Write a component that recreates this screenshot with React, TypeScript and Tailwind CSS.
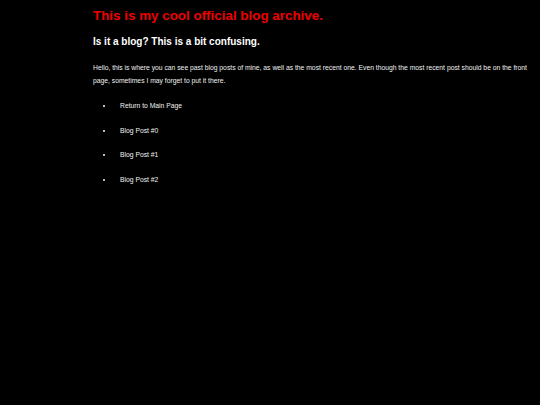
export default function App() {
  const links = ["Return to Main Page", "Blog Post #0", "Blog Post #1", "Blog Post #2"];
  return (
    <div
      className="min-h-[405px] w-full bg-black pl-[93px] pt-[8px] text-white antialiased"
      style={{ fontFamily: '"Liberation Sans", Arial, sans-serif' }}
    >
      <h1 className="text-[13.4px] font-bold leading-[16px] text-[#ee0000]">
        This is my cool official blog archive.
      </h1>
      <h2 className="mt-[12px] text-[10px] font-bold leading-[12px]">
        Is it a blog? This is a bit confusing.
      </h2>
      <p className="mt-[13px] w-[438px] text-[6.77px] leading-[13px] text-[#f0f0f0]">
        Hello, this is where you can see past blog posts of mine, as well as the most recent one. Even though the
        most recent post should be on the front page, sometimes I may forget to put it there.
      </p>
      <ul className="mt-[7px]">
        {links.map((t) => (
          <li key={t} className="flex items-center text-[6.77px] leading-[24.5px] text-[#f0f0f0]">
            <span className="ml-[10px] mr-[15px] h-[2px] w-[2px] rounded-full bg-white" />
            <span>{t}</span>
          </li>
        ))}
      </ul>
    </div>
  );
}
